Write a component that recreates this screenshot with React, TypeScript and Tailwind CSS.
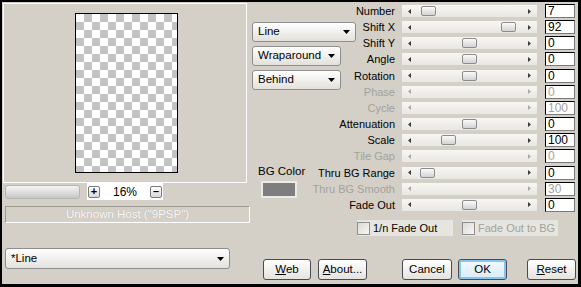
import type { ReactNode } from "react";

type Row = { label: string; value: string; thumb?: number; on: boolean };

const ROWS: Row[] = [
  { label: "Number", value: "7", thumb: 19, on: true },
  { label: "Shift X", value: "92", thumb: 99, on: true },
  { label: "Shift Y", value: "0", thumb: 60, on: true },
  { label: "Angle", value: "0", thumb: 60, on: true },
  { label: "Rotation", value: "0", thumb: 60, on: true },
  { label: "Phase", value: "0", on: false },
  { label: "Cycle", value: "100", on: false },
  { label: "Attenuation", value: "0", thumb: 60, on: true },
  { label: "Scale", value: "100", thumb: 39, on: true },
  { label: "Tile Gap", value: "0", on: false },
  { label: "Thru BG Range", value: "0", thumb: 18, on: true },
  { label: "Thru BG Smooth", value: "30", on: false },
  { label: "Fade Out", value: "0", thumb: 60, on: true },
];

function Caret({ className = "" }: { className?: string }) {
  return (
    <svg width="7" height="4" viewBox="0 0 7 4" className={className}>
      <polygon points="0,0 7,0 3.5,4" fill="#000" />
    </svg>
  );
}

function Combo({ label, w, h = 20 }: { label: string; w: number; h?: number }) {
  return (
    <div
      style={{ width: w, height: h }}
      className="flex items-center rounded-[3px] border border-[#8e8e8e] bg-gradient-to-b from-white to-[#e2e1dc] pl-[5px] pr-[5px] text-[11.5px] text-black"
    >
      <span className="leading-none">{label}</span>
      <Caret className="ml-auto" />
    </div>
  );
}

function Arrow({ right, on, className = "" }: { right?: boolean; on: boolean; className?: string }) {
  return (
    <svg width="3" height="5" viewBox="0 0 3 5" className={className}>
      <polygon points={right ? "0,0 3,2.5 0,5" : "3,0 0,2.5 3,5"} fill={on ? "#3c3c3c" : "#a8a8a8"} />
    </svg>
  );
}

function Slider({ thumb, on }: { thumb?: number; on: boolean }) {
  return (
    <div className="ml-[7px] mt-[1px] flex h-[12px] w-[135px] items-center bg-gradient-to-b from-[#f7f6f3] to-[#e8e7e2]">
      <Arrow on={on} className="ml-[6px] shrink-0" />
      {thumb !== undefined ? (
        <div
          style={{ marginLeft: thumb - 9 }}
          className="h-[10px] w-[15px] shrink-0 rounded-[2px] border border-[#8c8c8c] bg-gradient-to-b from-[#fbfbfb] to-[#d3d3d3]"
        />
      ) : null}
      <Arrow right on={on} className="ml-auto mr-[6px] shrink-0" />
    </div>
  );
}

function Button({ children, w, ml, ok }: { children: ReactNode; w: number; ml: number; ok?: boolean }) {
  return (
    <div
      style={{ width: w, marginLeft: ml }}
      className={
        "flex h-[21px] items-center justify-center rounded-[3px] border border-[#4a4a55] text-[11.5px] text-black " +
        (ok
          ? "bg-gradient-to-b from-[#f2f9fd] to-[#d9ecf7] shadow-[inset_0_0_0_2px_#86c6ee]"
          : "bg-gradient-to-b from-white to-[#e4e3de]")
      }
    >
      {children}
    </div>
  );
}

function SmallBtn({ children }: { children: ReactNode }) {
  return (
    <div className="flex h-[12px] w-[12px] items-center justify-center rounded-[2px] border border-[#7a7a7a] bg-gradient-to-b from-white to-[#d8d8d8] text-[11px] font-bold leading-none text-black">
      {children}
    </div>
  );
}

function Check({ label, on }: { label: string; on: boolean }) {
  return (
    <div className="flex h-[16px] w-[96px] items-center bg-[#e6e5e0]">
      <div className="h-[13px] w-[13px] border border-[#8f8f8f] bg-gradient-to-br from-[#dcdbd5] to-[#f6f6f4]" />
      <span className={"ml-[3px] whitespace-nowrap " + (on ? "text-black" : "text-[#a3a29a]")}>{label}</span>
    </div>
  );
}

function LeftPanel() {
  return (
    <div className="flex w-[248px] shrink-0 flex-col pl-[1px] pt-[1px]">
      <div className="h-[180px] w-[244px] border border-white">
        <div className="ml-[71px] mt-[9px] h-[160px] w-[103px] border border-black bg-[repeating-conic-gradient(#c3c3c3_0_25%,#ffffff_0_50%)] bg-[length:16px_16px]" />
      </div>
      <div className="flex h-[17px] items-center">
        <div className="ml-[2px] h-[14px] w-[75px] rounded-[3px] border border-[#b4b4b4] bg-gradient-to-b from-[#f4f4f4] via-[#dedede] to-[#c6c6c6]" />
        <div className="ml-[7px] flex h-[17px] w-[76px] items-center bg-white">
          <div className="ml-[1px]">
            <SmallBtn>+</SmallBtn>
          </div>
          <span className="ml-[13px] text-[12px] leading-none text-black">16%</span>
          <div className="ml-[13px]">
            <SmallBtn>
              <span className="-mt-[1px]">–</span>
            </SmallBtn>
          </div>
        </div>
      </div>
      <div className="ml-[2px] mt-[6px] flex h-[17px] w-[245px] items-center justify-center border border-[#9d9a91] border-b-white border-r-white text-[11.5px] text-[#fbfbfa] [text-shadow:0_0_1px_#a9a59c]">
        Unknown Host ("9PSP")
      </div>
      <div className="ml-[2px] mt-[25px]">
        <Combo label="*Line" w={225} h={21} />
      </div>
    </div>
  );
}

function RightPanel() {
  return (
    <div className="flex flex-1 flex-col">
      <div className="flex">
        <div className="flex w-[106px] shrink-0 flex-col pl-[2px] pt-[20px]">
          <Combo label="Line" w={104} />
          <div className="mt-[4px]">
            <Combo label="Wraparound" w={89} />
          </div>
          <div className="mt-[4px]">
            <Combo label="Behind" w={89} />
          </div>
          <div className="ml-[6px] mt-[75px] text-[11.5px] leading-[13px] text-black">BG Color</div>
          <div className="ml-[9px] mt-[3px] h-[17px] w-[36px] border-2 border-[#eceae4] bg-[#7e7e7e]" />
        </div>
        <div className="flex flex-col pt-[2px]">
          {ROWS.map((r) => (
            <div key={r.label} className="flex h-[16.17px] items-start">
              <div
                className={
                  "flex w-[39px] justify-end whitespace-nowrap leading-[14px] " +
                  (r.on ? "text-black" : "text-[#a3a29a]")
                }
              >
                {r.label}
              </div>
              <Slider thumb={r.thumb} on={r.on} />
              <div
                className={
                  "ml-[8px] h-[14px] w-[30px] border border-black border-b-[#7a7a7a] border-r-[#7a7a7a] bg-white pl-[2px] text-[12px] leading-[12px] " +
                  (r.on ? "text-black" : "text-[#a3a29a]")
                }
              >
                {r.value}
              </div>
            </div>
          ))}
        </div>
      </div>
      <div className="mt-[6px] flex pl-[107px]">
        <Check label="1/n Fade Out" on />
        <div className="ml-[9px]">
          <Check label="Fade Out to BG" on={false} />
        </div>
      </div>
      <div className="mt-[23px] flex">
        <Button w={48} ml={13}>
          <span>
            <u>W</u>eb
          </span>
        </Button>
        <Button w={49} ml={7}>
          <span>
            <u>A</u>bout...
          </span>
        </Button>
        <Button w={50} ml={35}>
          Cancel
        </Button>
        <Button w={49} ml={6} ok>
          OK
        </Button>
        <Button w={49} ml={20}>
          <span>
            <u>R</u>eset
          </span>
        </Button>
      </div>
    </div>
  );
}

export default function App() {
  return (
    <div className="h-[287px] w-[581px] bg-black pb-[3px] pl-[2px] pr-[3px] pt-[2px] font-['Liberation_Sans',Arial,sans-serif] text-[11px]">
      <div className="flex h-full bg-[#d4d0c8]">
        <LeftPanel />
        <RightPanel />
      </div>
    </div>
  );
}
